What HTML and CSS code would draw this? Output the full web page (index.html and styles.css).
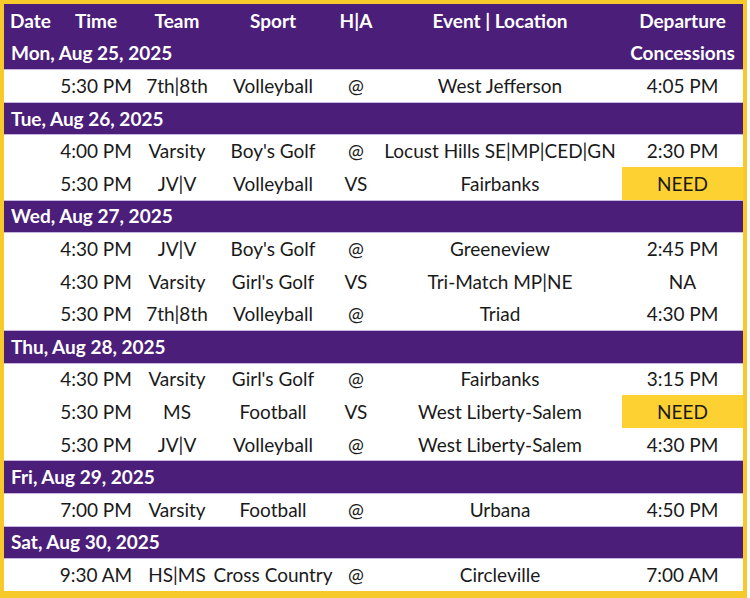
FILE: index.html
```html
<!DOCTYPE html>
<html>
<head>
<meta charset="utf-8">
<link rel="stylesheet" href="styles.css">
</head>
<body>
<div class="frame">
<table class="schedule">
<colgroup>
<col class="c-date"><col class="c-time"><col class="c-team"><col class="c-sport"><col class="c-ha"><col class="c-event"><col class="c-dep">
</colgroup>
<tr class="head">
<th class="left">Date</th><th>Time</th><th>Team</th><th>Sport</th><th>H|A</th><th>Event | Location</th><th>Departure</th>
</tr>
<tr class="day first"><td colspan="6" class="left">Mon, Aug 25, 2025</td><td class="hdr">Concessions</td></tr>
<tr class="row top"><td></td><td>5:30 PM</td><td>7th|8th</td><td>Volleyball</td><td>@</td><td>West Jefferson</td><td>4:05 PM</td></tr>
<tr class="day"><td colspan="7" class="left">Tue, Aug 26, 2025</td></tr>
<tr class="row top"><td></td><td>4:00 PM</td><td>Varsity</td><td>Boy's Golf</td><td>@</td><td>Locust Hills SE|MP|CED|GN</td><td>2:30 PM</td></tr>
<tr class="row"><td></td><td>5:30 PM</td><td>JV|V</td><td>Volleyball</td><td>VS</td><td>Fairbanks</td><td class="need">NEED</td></tr>
<tr class="day"><td colspan="7" class="left">Wed, Aug 27, 2025</td></tr>
<tr class="row top"><td></td><td>4:30 PM</td><td>JV|V</td><td>Boy's Golf</td><td>@</td><td>Greeneview</td><td>2:45 PM</td></tr>
<tr class="row"><td></td><td>4:30 PM</td><td>Varsity</td><td>Girl's Golf</td><td>VS</td><td>Tri-Match MP|NE</td><td>NA</td></tr>
<tr class="row"><td></td><td>5:30 PM</td><td>7th|8th</td><td>Volleyball</td><td>@</td><td>Triad</td><td>4:30 PM</td></tr>
<tr class="day"><td colspan="7" class="left">Thu, Aug 28, 2025</td></tr>
<tr class="row top"><td></td><td>4:30 PM</td><td>Varsity</td><td>Girl's Golf</td><td>@</td><td>Fairbanks</td><td>3:15 PM</td></tr>
<tr class="row"><td></td><td>5:30 PM</td><td>MS</td><td>Football</td><td>VS</td><td>West Liberty-Salem</td><td class="need">NEED</td></tr>
<tr class="row"><td></td><td>5:30 PM</td><td>JV|V</td><td>Volleyball</td><td>@</td><td>West Liberty-Salem</td><td>4:30 PM</td></tr>
<tr class="day"><td colspan="7" class="left">Fri, Aug 29, 2025</td></tr>
<tr class="row top"><td></td><td>7:00 PM</td><td>Varsity</td><td>Football</td><td>@</td><td>Urbana</td><td>4:50 PM</td></tr>
<tr class="day"><td colspan="7" class="left">Sat, Aug 30, 2025</td></tr>
<tr class="row top"><td></td><td>9:30 AM</td><td>HS|MS</td><td>Cross Country</td><td>@</td><td>Circleville</td><td>7:00 AM</td></tr>
</table>
</div>
</body>
</html>
```
FILE: styles.css
```css
html, body {
  margin: 0;
  padding: 0;
  background: #ffffff;
}
.frame {
  width: 739px;
  border-style: solid;
  border-color: #f7c92b;
  border-width: 4px 4px 7px 4px;
  background: #ffffff;
}
.schedule {
  width: 739px;
  table-layout: fixed;
  border-collapse: collapse;
  border-spacing: 0;
  font-family: Lato, "Liberation Sans", sans-serif;
  font-size: 19px;
}
.c-date { width: 46px; }
.c-time { width: 92px; }
.c-team { width: 70px; }
.c-sport { width: 122px; }
.c-ha { width: 44px; }
.c-event { width: 244px; }
.c-dep { width: 121px; }
.schedule th, .schedule td {
  height: 32.6px;
  padding: 0;
  text-align: center;
  vertical-align: middle;
  white-space: nowrap;
  overflow: visible;
}
.head th, .day td {
  background: #4a1e79;
  color: #ffffff;
  font-weight: 700;
}
.head th.left { text-align: left; padding-left: 6px; }
.day td.left { text-align: left; padding-left: 7px; }
.day td { box-shadow: inset 0 1px 0 #c7b5e2; }
.day.first td { box-shadow: none; }
.row td {
  color: #1a1a1a;
  background: #ffffff;
}
.row.top td { box-shadow: inset 0 1px 0 #c7b5e2; }
.row td.need { background: #fcd131; }
```
